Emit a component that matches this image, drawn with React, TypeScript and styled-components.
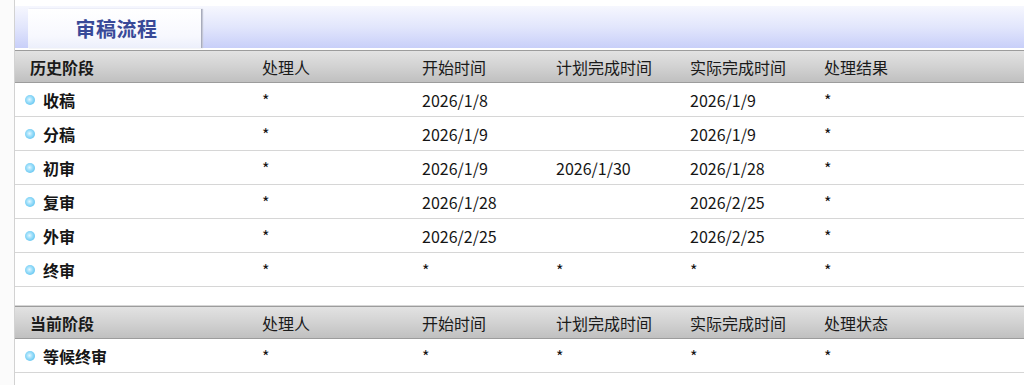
import React from "react";
import styled, { createGlobalStyle } from "styled-components";

const GlobalStyle = createGlobalStyle`
  html, body { margin: 0; padding: 0; background: #fbfbfb; }
  body { font-family: "Noto Sans CJK SC", "Noto Sans", sans-serif; color: #151515; }
`;

const Wrapper = styled.div`
  margin-left: 14px;
  border-left: 1px solid #d2d2d2;
  background: #ffffff;
  padding-top: 6px;
  min-height: 379px;
`;

const Band = styled.div`
  height: 42px;
  background: linear-gradient(to bottom, #f6f7fe 0%, #e2e6fc 50%, #c8cff9 100%);
  display: flex;
  align-items: flex-end;
  padding-left: 13px;
`;

const Tab = styled.div`
  width: 174px;
  height: 39px;
  padding-left: 4px;
  box-sizing: border-box;
  background: linear-gradient(to bottom, #ffffff 0%, #f7f8fe 70%, #eceffb 100%);
  border-right: 1px solid #a8acbc;
  box-shadow: 1px 0 1px #c4c7d6;
  display: flex;
  align-items: center;
  justify-content: center;
  font-size: 20px;
  font-weight: 700;
  color: #394a98;
  letter-spacing: 0.5px;
`;

const Gap = styled.div`
  height: 2px;
  background: #ffffff;
`;

const COLS = "239px 160px 134px 134px 134px 1fr";

const HeadRow = styled.div`
  display: grid;
  grid-template-columns: ${COLS};
  height: 31px;
  border-top: 1px solid #9c9c9c;
  border-bottom: 1px solid #9c9c9c;
  background: linear-gradient(to bottom, #e2e2e2 0%, #d2d2d2 50%, #c0c0c0 100%);
  align-items: center;
  font-size: 16px;
  color: #1a1a1a;
`;

const HeadCell = styled.div<{ $first?: boolean }>`
  padding-left: ${(p) => (p.$first ? "15px" : "8px")};
  font-weight: ${(p) => (p.$first ? 700 : 400)};
  white-space: nowrap;
`;

const Row = styled.div<{ $h?: number }>`
  display: grid;
  grid-template-columns: ${COLS};
  height: ${(p) => p.$h ?? 33}px;
  border-bottom: 1px solid #d6d6d6;
  align-items: center;
  font-size: 16px;
  color: #151515;
`;

const Cell = styled.div`
  padding-left: 8px;
  white-space: nowrap;
`;

const NameCell = styled.div`
  display: flex;
  align-items: center;
  gap: 8px;
  padding-left: 10px;
  font-weight: 700;
`;

const Bullet = styled.span`
  width: 10px;
  height: 10px;
  border-radius: 50%;
  background: radial-gradient(circle at 45% 45%, #e4f7ff 0%, #a0e0fb 35%, #66c6f0 75%, #52b6e6 100%);
  flex: none;
`;

type Item = [string, string, string, string, string, string];

const history: Item[] = [
  ["收稿", "*", "2026/1/8", "", "2026/1/9", "*"],
  ["分稿", "*", "2026/1/9", "", "2026/1/9", "*"],
  ["初审", "*", "2026/1/9", "2026/1/30", "2026/1/28", "*"],
  ["复审", "*", "2026/1/28", "", "2026/2/25", "*"],
  ["外审", "*", "2026/2/25", "", "2026/2/25", "*"],
  ["终审", "*", "*", "*", "*", "*"],
];

const current: Item[] = [["等候终审", "*", "*", "*", "*", "*"]];

function Section({ head, items }: { head: string[]; items: Item[] }) {
  return (
    <>
      <HeadRow>
        {head.map((h, i) => (
          <HeadCell key={i} $first={i === 0}>
            {h}
          </HeadCell>
        ))}
      </HeadRow>
      {items.map((it, i) => (
        <Row key={i}>
          <NameCell>
            <Bullet />
            {it[0]}
          </NameCell>
          {it.slice(1).map((v, j) => (
            <Cell key={j}>{v}</Cell>
          ))}
        </Row>
      ))}
    </>
  );
}

export default function App() {
  return (
    <>
      <GlobalStyle />
      <Wrapper>
        <Band>
          <Tab>审稿流程</Tab>
        </Band>
        <Gap />
        <Section
          head={["历史阶段", "处理人", "开始时间", "计划完成时间", "实际完成时间", "处理结果"]}
          items={history}
        />
        <Row $h={18} />
        <Section
          head={["当前阶段", "处理人", "开始时间", "计划完成时间", "实际完成时间", "处理状态"]}
          items={current}
        />
      </Wrapper>
    </>
  );
}
